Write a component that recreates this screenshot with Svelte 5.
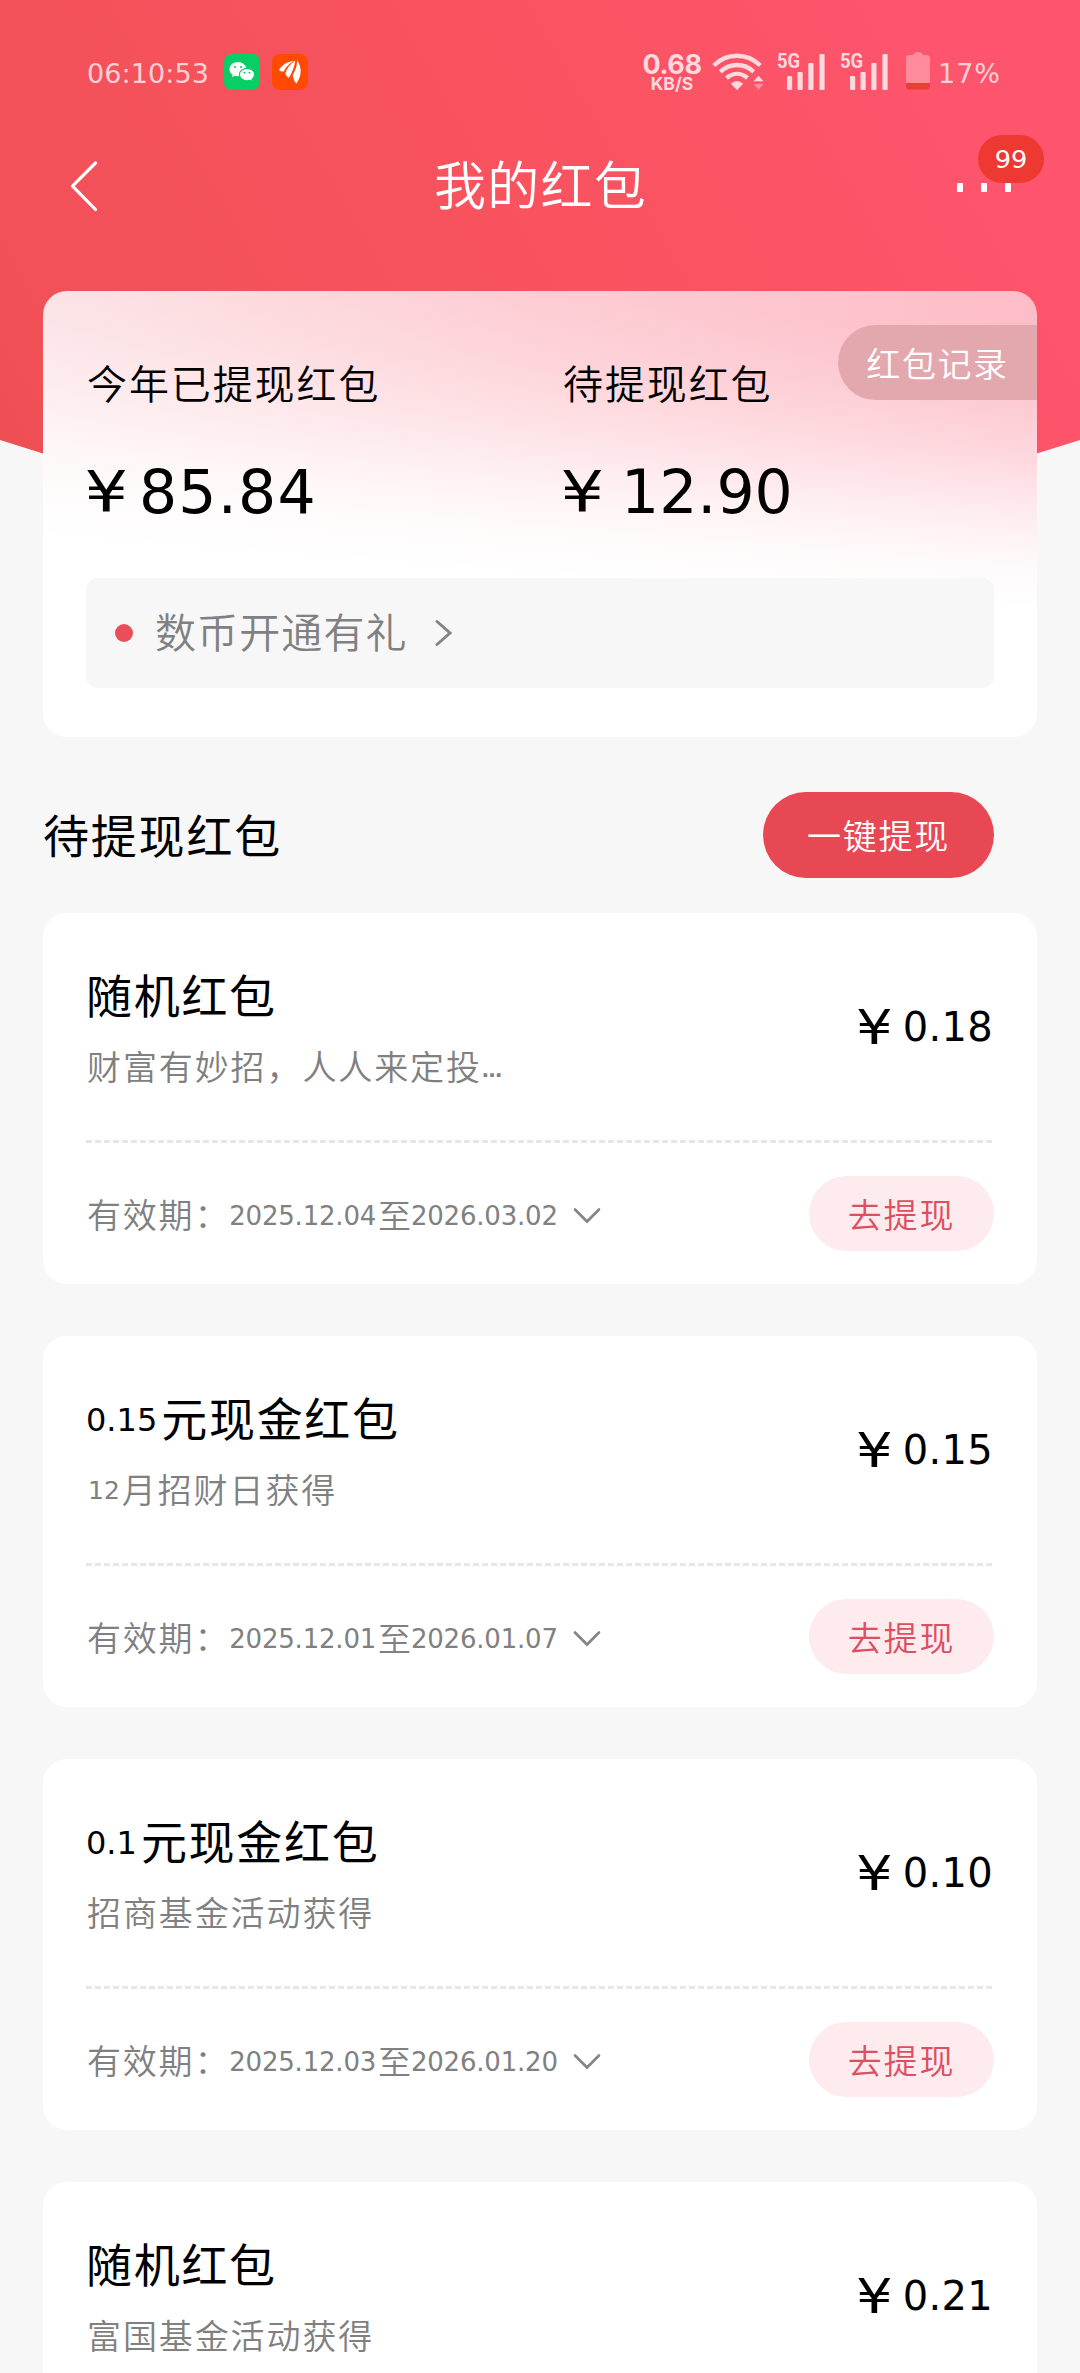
<script>
  const totals = [
    { label: '今年已提现红包', value: '85.84' },
    { label: '待提现红包', value: '12.90' },
  ];
  const packets = [
    { title: '随机红包', from: '财富有妙招，人人来定投…', amount: '0.18', start: '2025.12.04', end: '2026.03.02' },
    { title: '0.15元现金红包', from: '12月招财日获得', amount: '0.15', start: '2025.12.01', end: '2026.01.07' },
    { title: '0.1元现金红包', from: '招商基金活动获得', amount: '0.10', start: '2025.12.03', end: '2026.01.20' },
    { title: '随机红包', from: '富国基金活动获得', amount: '0.21' },
  ];
  // Split mixed text so that figures and Han characters get their own metrics.
  const runs = (text) =>
    text.match(/[0-9.]+|…|[^0-9.…]+/g).map((t) => ({
      t,
      kind: /^[0-9.]/.test(t) ? 'num' : t === '…' ? 'dots' : 'han',
    }));
</script>

{#snippet mixed(text)}
  {#each runs(text) as run}<span class={run.kind}>{run.t}</span>{/each}
{/snippet}

{#snippet signal()}
  <div class="signal">
    <span>5G</span>
    <svg width="49" height="38" viewBox="0 0 49 38">
      <rect x="10" y="23" width="5.2" height="14" rx="1" />
      <rect x="20.5" y="19" width="5.2" height="18" rx="1" />
      <rect x="31.3" y="10" width="5.2" height="27" rx="1" />
      <rect x="42.4" y="1" width="5.2" height="36" rx="1" />
    </svg>
  </div>
{/snippet}

<div class="screen">
  <header class="hero">
    <div class="status">
      <span class="num clock">06:10:53</span>
      <svg class="app" width="36" height="36" viewBox="0 0 36 36">
        <rect width="36" height="36" rx="8" fill="#07cf66" />
        <path d="M14 8C9.300 8 5.500 11.200 5.500 15.200c0 2.300 1.200 4.200 3.200 5.500l-.8 2.600 3-1.500c1 .3 2 .4 3.100.4 4.700 0 8.500-3.100 8.500-7S18.700 8 14 8z" fill="#fff" />
        <path d="M23 14.300c4.200 0 7.600 2.800 7.600 6.300 0 2-1.100 3.700-2.700 4.800l.5 2.200-2.500-1.200c-.9.300-1.900.5-2.900.5-4.200 0-7.600-2.800-7.600-6.300s3.400-6.300 7.600-6.300z" fill="#fff" stroke="#07cf66" stroke-width="1.200" />
        <g fill="#07cf66"><circle cx="11" cy="13" r="1.100" /><circle cx="17" cy="13" r="1.100" /><circle cx="20.400" cy="18.800" r="1" /><circle cx="25.500" cy="18.800" r="1" /></g>
      </svg>
      <svg class="app second" width="36" height="36" viewBox="0 0 36 36">
        <rect width="36" height="36" rx="8" fill="#ff4a00" />
        <g fill="#fff">
          <path d="M21.500 7C15.500 7.500 9.500 11 7 16.200q2.200 1.800 4.800 1.200C13.500 13.500 17 10 21.500 7z" />
          <path d="M23.300 6.500c-5 3.500-8.500 7.500-10 13q1.200 3.200 3.500 4.600C20 19 22.500 13 23.300 6.500z" />
          <path d="M25 6c.4 6-2 10.500-4.300 15.500q.8 5 3.400 8.300C29.500 23 30.500 13.500 25 6z" />
        </g>
      </svg>
      <div class="speed"><b>0.68</b><small>KB/S</small></div>
      <svg class="wifi" width="52" height="38" viewBox="0 0 52 38">
        <g fill="none" stroke="#ffd9de" stroke-width="4.400">
          <path d="M1.800 12.500C15-.5 35-.5 48.200 12.500" />
          <path d="M8.300 18.800C18 9.800 32 9.800 41.700 18.800" />
          <path d="M14.500 25C21 19.500 29 19.500 35.500 25" />
        </g>
        <path d="M25 37l-6.200-6.200q6.200-5.400 12.400 0z" fill="#ffd9de" />
        <path d="M41.500 28.200l5-5.500 5 5.500z" fill="#ffd9de" />
        <path d="M41.500 31l5 5.500 5-5.500z" fill="#ff8d9d" />
      </svg>
      <div class="signals">{@render signal()}{@render signal()}</div>
      <svg class="battery" width="24" height="38" viewBox="0 0 24 38">
        <path d="M3 3h4q1-3 5-3t5 3h4q3 0 3 3v25H0V6q0-3 3-3z" fill="#ff8b9c" />
        <path d="M0 31h24v2q0 4.500-4 4.500H4q-4 0-4-4.500z" fill="#eb3f33" />
      </svg>
      <span class="num percent">17%</span>
    </div>
    <nav>
      <svg class="back" width="28" height="52" viewBox="0 0 28 52">
        <path d="M25.500 3L2.500 26.200 25.500 49.500" fill="none" stroke="#fff" stroke-width="3.200" stroke-linecap="round" stroke-linejoin="round" />
      </svg>
      <h1 class="han">我的红包</h1>
      <div class="more">
        <span class="badge num">99</span>
        <i></i><i></i><i></i>
      </div>
    </nav>
  </header>

  <section class="summary">
    <button class="log"><span class="han">红包记录</span></button>
    <div class="totals">
      {#each totals as item}
        <div class="total">
          <span class="han">{item.label}</span>
          <div class="money"><span class="yen">¥</span><span class="num">{item.value}</span></div>
        </div>
      {/each}
    </div>
    <div class="promo">
      <i></i>
      <span class="han">数币开通有礼</span>
      <svg width="18" height="28" viewBox="0 0 18 28"><path d="M2 2.500L15 14 2 25.500" fill="none" stroke="#858585" stroke-width="3" stroke-linecap="round" /></svg>
    </div>
  </section>

  <div class="heading">
    <h2 class="han">待提现红包</h2>
    <button class="all"><span class="han">一键提现</span></button>
  </div>

  <main>
    {#each packets as p}
      <article>
        <div class="top">
          <div class="info">
            <div class="title">{@render mixed(p.title)}</div>
            <div class="from">{@render mixed(p.from)}</div>
          </div>
          <div class="price"><span class="yen">¥</span><span class="num">{p.amount}</span></div>
        </div>
        {#if p.start}
          <div class="dash"></div>
          <div class="bottom">
            <span class="han">有效期：</span>
            <div class="dates"><span class="num">{p.start}</span><span class="han">至</span><span class="num">{p.end}</span></div>
            <svg width="28" height="18" viewBox="0 0 28 18"><path d="M2 2.500l12 12 12-12" fill="none" stroke="#858585" stroke-width="2.700" stroke-linecap="round" /></svg>
            <button class="get"><span class="han">去提现</span></button>
          </div>
        {/if}
      </article>
    {/each}
  </main>
</div>

<style>
  :global(body) { background: #f7f7f7; }
  .screen {
    width: 1080px; height: 2373px; overflow: hidden; box-sizing: border-box;
    background: #f7f7f7; color: #000;
    font-family: 'DejaVu Sans', 'Noto Sans CJK SC', sans-serif; line-height: 1;
  }
  button { border: 0; padding: 0; font: inherit; display: flex; align-items: center; justify-content: center; }
  h1, h2 { margin: 0; font-weight: 400; }
  span { white-space: nowrap; }
  .han { font-family: 'Noto Sans CJK SC', sans-serif; font-weight: 350; margin-bottom: .11em; }
  h2.han, .title .han { font-weight: 400; }
  button .han { margin-bottom: 0; }
  .num { font-family: 'DejaVu Sans', sans-serif; }
  .yen { font-family: 'DejaVu Sans', sans-serif; display: inline-block; transform: scaleX(1.200); }

  .hero {
    height: 500px; margin-bottom: -209px;
    background: linear-gradient(60deg, #ee4f53 0%, #f3515a 20%, #f8535f 52%, #ff546e 90%);
    clip-path: polygon(0 0, 100% 0, 100% 440px, 940px 484px, 140px 484px, 0 440px);
  }
  .status { display: flex; align-items: flex-start; height: 96px; padding: 53px 0 0 87px; box-sizing: border-box; color: #ffd0d5; }
  .clock { font-size: 27px; margin-top: 7px; width: 137px; letter-spacing: .1px; }
  .app { margin-top: 1px; }
  .second { margin-left: 12px; }
  .speed { width: 60px; margin-left: 334px; display: flex; flex-direction: column; align-items: center; font-family: Inter, sans-serif; color: #ffd9de; }
  .speed b { font-size: 27px; line-height: 23px; font-weight: 700; letter-spacing: -.4px; }
  .speed small { font-size: 17.500px; line-height: 15px; font-weight: 700; }
  .wifi { margin-left: 10px; }
  .signals { display: flex; gap: 14px; margin-left: 13px; }
  .signal { display: grid; width: 49px; height: 38px; fill: #ffd9de; color: #ffd9de; }
  .signal > * { grid-area: 1 / 1; }
  .signal span { font: 700 21px/24px Roboto, sans-serif; margin-top: -4px; transform: scaleX(.88); transform-origin: 0 0; }
  .battery { margin: -1px 0 0 17px; }
  .percent { font-size: 27px; margin: 7px 0 0 8px; letter-spacing: 1px; }
  nav { display: flex; align-items: center; height: 180px; padding: 0 69px 0 70px; justify-content: space-between; }
  h1 { font-size: 52px; letter-spacing: 1.300px; color: #fff; }
  .more { position: relative; display: flex; gap: 18px; width: 54px; }
  .back { width: 28px; margin-right: 26px; }
  .more i { position: relative; flex: none; width: 6px; height: 9px; border-radius: 1px; background: #fff; margin-top: 2px; }
  .badge {
    position: absolute; left: 21px; top: -46px; width: 66px; height: 48px; border-radius: 24px;
    background: #ee3932; color: #fff; font-size: 25.500px; display: flex; align-items: center; justify-content: center; padding-top: 2px; box-sizing: border-box;
  }

  .summary {
    position: relative; margin: 0 43px; height: 446px; box-sizing: border-box; padding: 71px 43px 49px; border-radius: 24px;
    background:
      linear-gradient(184deg, #fff0 8%, #ffffff26 20%, #ffffff66 32%, #ffffffb3 43%, #ffffffe8 53%, #fff 62%),
      linear-gradient(90deg, #fce1e4 0%, #fdcdd3 50%, #fdbdc8 100%);
    display: flex; flex-direction: column; justify-content: space-between;
  }
  .log {
    position: absolute; right: 0; top: 34px; width: 199px; height: 75px; border-radius: 38px 0 0 38px;
    background: #e3a8ad; color: #fff; font-size: 34px; letter-spacing: 1.600px;
  }
  .totals { display: grid; grid-template-columns: 476px 1fr; }
  .total { font-size: 40px; letter-spacing: 1.900px; display: flex; flex-direction: column; gap: 56px; height: 150px; }
  .total .han { margin-left: 1px; }
  .money { display: flex; align-items: center; letter-spacing: 0; }
  .money .yen { font-size: 57px; width: 36px; margin-left: 2px; }
  .money .num { font-size: 60px; margin-left: 15px; letter-spacing: 1.200px; }
  .total:last-child .num { margin-left: 21px; letter-spacing: 0; }
  .promo {
    display: flex; align-items: center; height: 110px; background: #f7f7f7; border-radius: 12px;
    padding-left: 29px; font-size: 41px; letter-spacing: 1.100px; color: #808080;
  }
  .promo i { width: 18px; height: 18px; border-radius: 50%; background: #ea4e5a; margin-right: 22px; }
  .promo svg { margin-left: 27px; }

  .heading { display: flex; align-items: center; justify-content: space-between; height: 86px; margin: 55px 86px 35px 43px; }
  h2 { font-size: 46px; letter-spacing: 1.800px; padding-top: 2px; }
  .all { width: 231px; height: 86px; border-radius: 43px; background: #e74853; color: #fff; font-size: 34px; letter-spacing: 1.800px; }

  main { display: flex; flex-direction: column; gap: 52px; }
  article { margin: 0 43px; height: 371px; flex: none; box-sizing: border-box; border-radius: 24px; background: #fff; padding: 0 43px; }
  .top { display: flex; justify-content: space-between; align-items: center; height: 227px; }
  .info { display: flex; flex-direction: column; gap: 29px; padding-top: 3px; }
  .title, .from { display: flex; align-items: center; }
  .title { font-size: 46px; height: 50px; letter-spacing: 1.700px; }
  .title .num { font-size: 32px; letter-spacing: 0; margin-top: 3px; margin-right: 4px; }
  .from { font-size: 34px; height: 36px; letter-spacing: 1.900px; color: #808080; padding-left: 1px; }
  .from .num { font-size: 25px; letter-spacing: 0; margin: 0 2px 0 1px; }
  .dots { font-size: 20px; font-weight: 700; letter-spacing: 0; margin-top: 5px; }
  .price { display: flex; align-items: center; }
  .price .yen { font-size: 48px; margin-right: 13px; }
  .price .num { font-size: 40px; margin-right: 1px; letter-spacing: .3px; }
  .dash { height: 3px; background: repeating-linear-gradient(90deg, #e6e6e6 0 6px, #fff 6px 9px); }
  .bottom { display: flex; align-items: center; height: 141px; color: #808080; font-size: 34px; letter-spacing: 1.800px; padding-left: 1px; box-sizing: border-box; }
  .bottom .han { margin-bottom: 0; }
  .bottom svg { margin: 4px 0 0 15px; }
  .dates { display: flex; align-items: center; font-size: 26px; letter-spacing: -.2px; padding-top: 4px; margin-left: -1px; }
  .dates .han { font-size: 33px; margin: 0 0 2px 2px; }
  .get { margin-left: auto; width: 185px; height: 75px; border-radius: 38px; background: #fdebed; color: #dc4f62; font-size: 34px; letter-spacing: 1.800px; }
</style>
